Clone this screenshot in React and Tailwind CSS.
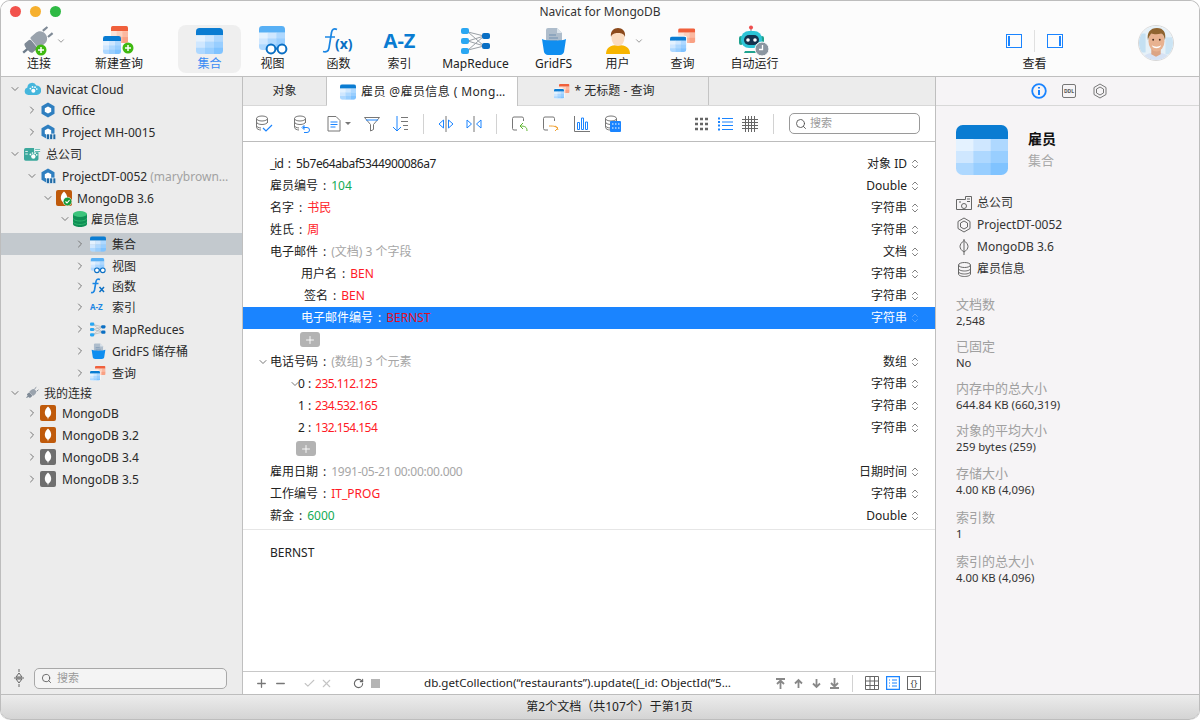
import React, { useId } from 'react'
import { ChevronDown, ChevronRight, ChevronsUpDown, Search, Plus, Minus, Check, X, RotateCw } from 'lucide-react'

const FONT = 'font-["Noto_Sans","Noto_Sans_CJK_SC",sans-serif]'

// ── Coloured app icons ──────────────────────────────────────────────────────

function Grid({ x = 0, y = 0, w = 52, h = 50, top = '#0a7cd2', className }) {
  const id = useId()
  const head = h * 0.28
  const cw = w / 3
  const ch = (h - head) / 3
  const cells = ['#e4f2ff', '#cfe7ff', '#aed8ff', '#cfe7ff', '#aed8ff', '#98ceff', '#aed8ff', '#98ceff', '#80c3ff']
  return (
    <g className={className}>
      <clipPath id={id}><rect x={x} y={y} width={w} height={h} rx={w * 0.13} /></clipPath>
      <g clipPath={`url(#${id})`}>
        <rect x={x} y={y} width={w} height={head} fill={top} />
        {cells.map((c, i) => (
          <rect key={i} x={x + (i % 3) * cw} y={y + head + Math.floor(i / 3) * ch} width={cw + 0.5} height={ch + 0.5} fill={c} />
        ))}
      </g>
    </g>
  )
}

function OrangeGrid({ x, y, w, h }) {
  const id = useId()
  const head = h * 0.3
  const cw = w / 3
  const ch = (h - head) / 2
  const cells = ['#fde3d8', '#fcd0bd', '#fbb8a0', '#fcd0bd', '#fbb8a0', '#f9a184']
  return (
    <g>
      <clipPath id={id}><rect x={x} y={y} width={w} height={h} rx={w * 0.1} /></clipPath>
      <g clipPath={`url(#${id})`}>
        <rect x={x} y={y} width={w} height={head} fill="#f0603c" />
        {cells.map((c, i) => (
          <rect key={i} x={x + (i % 3) * cw} y={y + head + Math.floor(i / 3) * ch} width={cw + 0.5} height={ch + 0.5} fill={c} />
        ))}
      </g>
    </g>
  )
}

const TableIcon = ({ className }) => (
  <svg viewBox="0 0 52 50" className={className}><Grid /></svg>
)

const QueryIcon = ({ className }) => (
  <svg viewBox="0 0 32 30" className={className}>
    <OrangeGrid x={10} y={0} w={21} h={18} />
    <rect x={0} y={9} width={21} height={20} rx={3} fill="#fff" />
    <Grid x={0} y={10} w={20} h={19} top="#0a7cd2" />
  </svg>
)

const GreenPlus = ({ x, y, r = 5.5 }) => (
  <g>
    <circle cx={x} cy={y} r={r} fill="#3fb911" />
    <path d={`M${x - r * 0.55} ${y}h${r * 1.1}M${x} ${y - r * 0.55}v${r * 1.1}`} stroke="#fff" strokeWidth="1.5" />
  </g>
)

const PlugIcon = ({ className, plus }) => (
  <svg viewBox="0 0 42 30" className={className}>
    <g transform="rotate(-40 20 15)">
      <path d="M2 15h7" stroke="#6d7b8a" strokeWidth="2.4" />
      <path d="M9 9h5a2 2 0 0 1 2 2v8a2 2 0 0 1-2 2H9c-1 0-2-2-2-6s1-6 2-6z" fill="#7f8a96" />
      <path d="M18 8h6c4 0 7 3 7 7s-3 7-7 7h-6a1.500 1.500 0 0 1-1.500-1.500v-11A1.500 1.500 0 0 1 18 8z" fill="#9aa3ad" />
      <path d="M31 11h6M31 19h6" stroke="#7f8a96" strokeWidth="2.200" />
    </g>
    {plus && <GreenPlus x={24} y={24} />}
  </svg>
)

const ViewIcon = ({ className }) => (
  <svg viewBox="0 0 30 30" className={className}>
    <Grid x={1} y={0} w={26} h={24} top="#58b0f5" />
    <circle cx={13} cy={23} r={4.400} fill="#fff" stroke="#0a6fc4" strokeWidth="2" />
    <circle cx={24} cy={23} r={4.400} fill="#fff" stroke="#0a6fc4" strokeWidth="2" />
    <path d="M17 22.500h3" stroke="#0a6fc4" strokeWidth="2" />
  </svg>
)

const FxIcon = () => (
  <svg viewBox="0 0 34 28" className="w-[34px] h-[28px]">
    <path d="M15 2.500c-3-1.500-5 0-5.500 3L7 21c-.5 3-2.500 4.500-6 3.500M3 10h10" fill="none" stroke="#1b86e3" strokeWidth="1.700" />
    <text x="13" y="22" fontSize="14" fontWeight="700" fill="#0a6fc4" className={FONT}>(x)</text>
  </svg>
)

const SmallFx = () => (
  <svg viewBox="0 0 16 16" className="w-[16px] h-[16px]">
    <path d="M10 1.500c-2.500-1-3.500 0-4 2L4.500 12c-.4 2-1.500 3-3.500 2.500M2.500 5.500h6" fill="none" stroke="#1b86e3" strokeWidth="1.600" />
    <path d="M9.500 9l4.500 5M14 9l-4.500 5" stroke="#0a6fc4" strokeWidth="1.500" />
  </svg>
)

const MapReduceIcon = ({ className }) => (
  <svg viewBox="0 0 30 26" className={className}>
    <path d="M7 4l16 4M7 4l16 14M7 13l16-5M7 13l16 5M7 22l16-14M7 22l16-4" stroke="#9aa0a6" strokeWidth="1" />
    <rect x="0" y="0" width="8" height="6" rx="2" fill="#2aa7f2" />
    <rect x="0" y="10" width="8" height="6" rx="2" fill="#2aa7f2" />
    <rect x="0" y="20" width="8" height="6" rx="2" fill="#2aa7f2" />
    <rect x="21" y="5" width="8" height="6" rx="2" fill="#0a6fc4" />
    <rect x="21" y="15" width="8" height="6" rx="2" fill="#0a6fc4" />
  </svg>
)

const GridFsIcon = ({ className }) => (
  <svg viewBox="0 0 26 28" className={className}>
    <path d="M7 1h9l5 5v11H5V3a2 2 0 0 1 2-2z" fill="#aebdcc" />
    <path d="M16 1l5 5h-5z" fill="#dde5ec" />
    <path d="M8 8h7M8 11h9M8 14h8" stroke="#6f8fb0" strokeWidth="1" />
    <path d="M1 12c3 2 21 2 24 0l-2 13c-.3 1.500-2 3-4 3H7c-2 0-3.700-1.500-4-3z" fill="#0f8ef0" />
  </svg>
)

const UserIcon = ({ className }) => (
  <svg viewBox="0 0 26 28" className={className}>
    <path d="M1 27c0-6 4-9 12-9s12 3 12 9z" fill="#f7b500" />
    <ellipse cx="13" cy="11" rx="6.500" ry="8" fill="#fbdcc0" />
    <path d="M6 10c-1-6 3-9 7-9s8 3 7 9c-1-3-3-4-7-4s-6 1-7 4z" fill="#8c4a1c" />
  </svg>
)

const RobotIcon = () => (
  <svg viewBox="0 0 32 32" className="w-[32px] h-[32px]">
    <path d="M12 7V3" stroke="#8a9aa5" strokeWidth="1.200" />
    <circle cx="12" cy="2.500" r="2" fill="#ef4d4d" />
    <rect x="0" y="11" width="4" height="9" rx="2" fill="#1fa38f" />
    <rect x="21" y="11" width="4" height="9" rx="2" fill="#1fa38f" />
    <rect x="2" y="6" width="21" height="17" rx="8" fill="#2cc4d6" />
    <rect x="5" y="10" width="15" height="10" rx="5" fill="#14324e" />
    <circle cx="9" cy="15" r="1.800" fill="#fff" />
    <circle cx="16" cy="15" r="1.800" fill="#fff" />
    <path d="M6 26h13l2 2H5z" fill="#1fa38f" />
    <circle cx="23" cy="24" r="7" fill="#8b96a1" stroke="#fff" strokeWidth="1" />
    <path d="M23.500 20v4.500H20" fill="none" stroke="#fff" strokeWidth="1.300" />
  </svg>
)

const CloudIcon = ({ className }) => (
  <svg viewBox="0 0 20 16" className={className}>
    <path d="M5 15a4.500 4.500 0 0 1-1-8.800A5.500 5.500 0 0 1 14.500 4 5.500 5.500 0 0 1 15 15z" fill="#45b6dc" />
    <circle cx="11" cy="10" r="2.400" fill="#fff" />
    <circle cx="7.500" cy="7.500" r="1" fill="#fff" /><circle cx="10" cy="5.500" r="1" fill="#fff" /><circle cx="13" cy="5.800" r="1" fill="#fff" /><circle cx="15" cy="8" r="1" fill="#fff" />
  </svg>
)

const OfficeIcon = ({ className }) => (
  <svg viewBox="0 0 20 16" className={className}>
    <rect x="0" y="1" width="17" height="15" rx="2" fill="#3ba89c" />
    <path d="M12 1h7v5h-7z" fill="#fff" /><path d="M13 2.500h6M13 5h6" stroke="#3ba89c" strokeWidth="1" />
    <path d="M1.500 5h3M1.500 8h3" stroke="#fff" strokeWidth="1" />
    <circle cx="11" cy="11" r="2.600" fill="#fff" />
    <circle cx="7.500" cy="8.500" r="1" fill="#fff" /><circle cx="10" cy="6.800" r="1" fill="#fff" /><circle cx="13" cy="7" r="1" fill="#fff" /><circle cx="15" cy="9" r="1" fill="#fff" />
  </svg>
)

const HexIcon = ({ className, people }) => (
  <svg viewBox="0 0 16 16" className={className}>
    <path d="M8 .5l6.500 3.700v7.600L8 15.500l-6.500-3.700V4.200z" fill="#2f7fc0" />
    <path d="M8 4.500l3.200 1.800v3.400L8 11.500 4.800 9.700V6.300z" fill="#fff" />
    {people && (
      <g fill="#1f6aa6" stroke="#fff" strokeWidth=".6">
        <rect x="6.500" y="10" width="3" height="5.500" />
        <rect x="9.800" y="10" width="3" height="5.500" />
        <rect x="13" y="10" width="2.800" height="5.500" />
      </g>
    )}
  </svg>
)

const MongoIcon = ({ className, gray, ok }) => (
  <svg viewBox="0 0 16 16" className={className}>
    <rect width="16" height="16" rx="2" fill={gray ? '#6f6f6f' : '#bf5a0b'} />
    <path d="M8 1.500c2.200 2 3.200 4.200 3.200 6.300s-1.300 4-2.800 4.900L8 14.800l-.4-2.100C6.100 11.800 4.800 10 4.800 7.800s1-4.300 3.200-6.300z" fill="#fff" />
    {ok && (
      <g>
        <circle cx="11.500" cy="11.500" r="4.300" fill="#129a3a" stroke="#fff" strokeWidth=".6" />
        <path d="M9.500 11.500l1.500 1.500 2.500-2.800" fill="none" stroke="#fff" strokeWidth="1.100" />
      </g>
    )}
  </svg>
)

const DbIcon = ({ className }) => (
  <svg viewBox="0 0 14 16" className={className}>
    <path d="M0 3v10c0 1.600 3 3 7 3s7-1.400 7-3V3z" fill="#0f8f55" />
    <ellipse cx="7" cy="3" rx="7" ry="3" fill="#3cc47c" />
    <path d="M0 7c0 1.600 3 3 7 3s7-1.400 7-3" fill="none" stroke="#2eb56e" strokeWidth="1" />
    <path d="M0 10.500c0 1.600 3 3 7 3s7-1.400 7-3" fill="none" stroke="#2eb56e" strokeWidth="1" />
  </svg>
)

const Avatar = () => (
  <svg viewBox="0 0 36 36" className="w-[36px] h-[36px] rounded-full border border-[#d8d8d8]">
    <rect width="36" height="36" fill="#e6f1f8" />
    <rect x="0" y="8" width="7" height="20" fill="#c4e0f2" />
    <rect x="28" y="12" width="8" height="18" fill="#cbe4f4" />
    <path d="M3 36c1-6 8-8 15-8s14 2 15 8z" fill="#d6e2f4" />
    <path d="M13 24h10v6l-5 2.500-5-2.500z" fill="#dca484" />
    <ellipse cx="18.500" cy="16" rx="8.500" ry="11" fill="#e8b290" />
    <path d="M9.500 15C8 7 12 2 19 2s10 5 8.500 13c-1-4-2-6.500-4-7-3 1-8 1-10.500 0-1.500 2-3 4-3.500 7z" fill="#8f6430" />
    <path d="M13.500 20.500c2.500 2 7.500 2 10 0-1 4-9 4-10 0z" fill="#fff" />
    <circle cx="15" cy="14.500" r="1" fill="#4a3020" /><circle cx="22" cy="14.500" r="1" fill="#4a3020" />
  </svg>
)

// ── Line icons for the small bars ───────────────────────────────────────────

const Line = ({ children, className = 'w-[18px] h-[18px]', box = '0 0 18 18' }) => (
  <svg viewBox={box} fill="none" strokeWidth="1" className={className}>{children}</svg>
)

const GrayDb = () => (
  <g stroke="#777">
    <ellipse cx="7" cy="3.500" rx="5.500" ry="2.500" />
    <path d="M1.500 3.500v9c0 1.400 2.500 2.500 4.500 2.500M12.500 3.500V8M1.500 7c0 1.400 2.500 2.500 5.500 2.500s5.500-1.100 5.500-2.500M1.500 10.500c0 1.400 2 2.300 4.500 2.500" />
  </g>
)

const DataTools = () => (
  <div className="flex items-center h-[36px] pl-[12px] shrink-0 border-b border-[#bcbcbc]">
    <Line><GrayDb /><path d="M8 13l3 3 6-6" stroke="#1a84ff" strokeWidth="1.200" /></Line>
    <div className="w-[20px]" />
    <Line><GrayDb /><path d="M9 12.500l2-2v4zM10 12.500h4a2.500 2.500 0 0 1 0 5h-3" stroke="#1a84ff" /></Line>
    <div className="w-[14px]" />
    <Line>
      <path d="M3 1.500h8l4 4V16H3z" stroke="#777" />
      <path d="M5.500 7h7M5.500 9.500h7M5.500 12h5" stroke="#1a84ff" strokeWidth="1.200" />
    </Line>
    <span className="ml-[2px] w-0 h-0 border-x-[3px] border-x-transparent border-t-[3px] border-t-[#777]" />
    <div className="w-[12px]" />
    <Line>
      <path d="M1.500 2.500h15M1.500 2.500l6 7V16l3-1.500v-5l6-7" stroke="#777" />
      <path d="M3 5h12" stroke="#1a84ff" />
    </Line>
    <div className="w-[10px]" />
    <Line>
      <path d="M6 1v15M2 12l4 4 4-4" stroke="#1a84ff" />
      <path d="M10 2.500h7M10 6.500h7M12 10.500h5M13 14.500h4" stroke="#777" />
    </Line>
    <div className="w-px h-[20px] bg-[#d2d2d2] ml-[14px]" />
    <div className="w-[13px]" />
    <Line>
      <path d="M9 1v16" stroke="#777" />
      <path d="M6.500 5L2 9l4.500 4zM11.500 5L16 9l-4.500 4z" stroke="#1a84ff" />
    </Line>
    <div className="w-[10px]" />
    <Line>
      <path d="M9 1v16" stroke="#777" />
      <path d="M2 5l4.500 4L2 13zM16 5l-4.500 4 4.500 4z" stroke="#1a84ff" />
    </Line>
    <div className="w-px h-[20px] bg-[#d2d2d2] ml-[13px]" />
    <div className="w-[14px]" />
    <Line>
      <path d="M6 15H3a1.500 1.500 0 0 1-1.500-1.500v-10A1.500 1.500 0 0 1 3 2h8a1.500 1.500 0 0 1 1.500 1.500V6" stroke="#777" />
      <path d="M16 16c0-4-2-5-7-5M12 8l-3 3 3 3" stroke="#5cb52e" />
    </Line>
    <div className="w-[13px]" />
    <Line>
      <path d="M6 15H3a1.500 1.500 0 0 1-1.500-1.500v-10A1.500 1.500 0 0 1 3 2h8a1.500 1.500 0 0 1 1.500 1.500V6" stroke="#777" />
      <path d="M7 11c5 0 8 0 9 4M13 16l3-3-3-2" stroke="#f0a030" />
    </Line>
    <div className="w-[13px]" />
    <Line>
      <path d="M1.500 1v15.500H17" stroke="#777" />
      <path d="M4.500 7.500h2v7h-2zM8.500 3h2v11.500h-2zM12.500 7h2v7.500h-2z" stroke="#1a84ff" />
    </Line>
    <div className="w-[13px]" />
    <Line>
      <GrayDb />
      <rect x="6" y="6" width="11" height="11" rx="1" fill="#1a84ff" />
      <path d="M8 9h1.500M11 9h1.500M14 9h1.500M8 13h1.500M11 13h1.500M14 13h1.500" stroke="#fff" />
    </Line>

    <div className="ml-auto flex items-center">
      <Line className="w-[14px] h-[14px]" box="0 0 14 14">
        <path d="M0 2h3M5 2h3M10 2h3M0 7h3M5 7h3M10 7h3M0 12h3M5 12h3M10 12h3" stroke="#666" strokeWidth="2.500" />
      </Line>
      <div className="w-[9px]" />
      <Line className="w-[15px] h-[14px]" box="0 0 15 14">
        <path d="M0 1.500h2M0 5h2M0 8.500h2M0 12.500h2" stroke="#1a84ff" strokeWidth="2" />
        <path d="M4 1.500h11M4 5h11M4 8.500h11M4 12.500h11" stroke="#1a84ff" />
      </Line>
      <div className="w-[9px]" />
      <Line className="w-[16px] h-[16px]" box="0 0 16 16">
        <path d="M0 3.500h16M0 6.500h16M0 9.500h16M0 12.500h16M3.500 0v16M6.500 0v16M9.500 0v16M12.500 0v16" stroke="#666" />
      </Line>
      <div className="w-px h-[20px] bg-[#d2d2d2] ml-[15px]" />
      <div className="ml-[15px] mr-[15px] w-[131px] h-[21px] rounded-[5px] border border-[#9a9a9a] flex items-center pl-[5px] gap-[3px]">
        <Search size={12} strokeWidth={1.800} className="text-[#555]" />
        <span className="text-[11px] text-[#9b9b9b]">搜索</span>
      </div>
    </div>
  </div>
)

// ── Top toolbar ─────────────────────────────────────────────────────────────

function ToolItem({ width, label, active, children, caret }) {
  return (
    <div className={`relative flex flex-col items-center h-[48px] shrink-0 rounded-lg ${width} ${active ? 'bg-[#efefef]' : ''}`}>
      <div className="h-[31px] flex items-center justify-center">{children}</div>
      <span className={`text-[12px] leading-[15px] ${active ? 'text-[#3b8cf5]' : 'text-[#222]'}`}>{label}</span>
      {caret && <ChevronDown size={10} strokeWidth={1.800} className={`absolute top-[11px] text-[#777] ${caret}`} />}
    </div>
  )
}

const Toolbar = () => (
  <div className="h-[76px] shrink-0 bg-[#fcfcfc] border-b border-[#bfbfbf] flex flex-col">
    <div className="relative h-[22px] flex items-center justify-center shrink-0">
      <div className="absolute left-[9px] top-[5px] flex gap-[9px]">
        <span className="w-[11px] h-[11px] rounded-full bg-[#f2524c]" />
        <span className="w-[11px] h-[11px] rounded-full bg-[#f6b02e]" />
        <span className="w-[11px] h-[11px] rounded-full bg-[#2fb944]" />
      </div>
      <span className="text-[12px] text-[#333]">Navicat for MongoDB</span>
    </div>
    <div className="flex items-start pt-[2px]">
      <ToolItem width="w-[76px]" label="连接" caret="left-[55px]"><PlugIcon plus className="w-[42px] h-[30px] ml-[-2px]" /></ToolItem>
      <ToolItem width="w-[84px]" label="新建查询">
        <svg viewBox="0 0 32 30" className="w-[32px] h-[30px]">
          <OrangeGrid x={8} y={0} w={17} h={17} />
          <Grid x={0} y={10} w={18} h={18} />
          <GreenPlus x={25} y={22} />
        </svg>
      </ToolItem>
      <div className="w-[17px] shrink-0" />
      <ToolItem width="w-[63px]" label="集合" active><TableIcon className="w-[27px] h-[26px]" /></ToolItem>
      <ToolItem width="w-[63px]" label="视图"><ViewIcon className="w-[30px] h-[30px]" /></ToolItem>
      <ToolItem width="w-[69px]" label="函数"><FxIcon /></ToolItem>
      <ToolItem width="w-[53px]" label="索引">
        <span className="text-[20px] font-bold leading-none text-[#0a7cd2]">A-Z</span>
      </ToolItem>
      <ToolItem width="w-[99px]" label="MapReduce"><MapReduceIcon className="w-[30px] h-[26px]" /></ToolItem>
      <ToolItem width="w-[57px]" label="GridFS"><GridFsIcon className="w-[26px] h-[28px]" /></ToolItem>
      <ToolItem width="w-[71px]" label="用户" caret="left-[52px]"><UserIcon className="w-[26px] h-[28px]" /></ToolItem>
      <ToolItem width="w-[59px]" label="查询"><QueryIcon className="w-[26px] h-[27px]" /></ToolItem>
      <ToolItem width="w-[85px]" label="自动运行"><RobotIcon /></ToolItem>
      <div className="flex-1" />
      <div className="w-[81px] flex flex-col items-center shrink-0 h-[48px]">
        <div className="h-[31px] flex items-center gap-[12px]">
          <span className="w-[16px] h-[14px] border border-[#1a84ff] pl-[1px] py-[1px]"><span className="block w-[2px] h-full bg-[#1a84ff]" /></span>
          <span className="w-px h-[22px] bg-[#e0e0e0]" />
          <span className="w-[16px] h-[14px] border border-[#1a84ff] pr-[1px] py-[1px] flex justify-end"><span className="block w-[2px] h-full bg-[#1a84ff]" /></span>
        </div>
        <span className="text-[12px] leading-[15px] text-[#222]">查看</span>
      </div>
      <div className="w-[63px] shrink-0" />
      <Avatar />
      <div className="w-[25px] shrink-0" />
    </div>
  </div>
)

// ── Sidebar ─────────────────────────────────────────────────────────────────

const LEVELS = [
  { pad: 'pl-[8px]', icon: 'ml-[3px]', text: 'ml-[5px]' },
  { pad: 'pl-[25px]', icon: 'ml-[2px]', text: 'ml-[6px]' },
  { pad: 'pl-[41px]', icon: 'ml-[2px]', text: 'ml-[5px]' },
  { pad: 'pl-[58px]', icon: 'ml-[2px]', text: 'ml-[4px]' },
  { pad: 'pl-[73px]', icon: 'ml-[4px]', text: 'ml-[6px]' },
]

const TREE = [
  { lv: 0, h: 'h-[21px] pt-px', open: true, label: 'Navicat Cloud', icon: <CloudIcon className="w-[17px] h-[14px]" /> },
  { lv: 1, h: 'h-[22px]', label: 'Office', icon: <HexIcon className="w-[16px] h-[16px]" /> },
  { lv: 1, h: 'h-[22px]', label: 'Project MH-0015', icon: <HexIcon people className="w-[16px] h-[16px]" /> },
  { lv: 0, h: 'h-[22px]', open: true, label: '总公司', icon: <OfficeIcon className="w-[17px] h-[14px]" /> },
  { lv: 1, h: 'h-[22px]', open: true, label: 'ProjectDT-0052', note: ' (marybrown…', icon: <HexIcon people className="w-[16px] h-[16px]" /> },
  { lv: 2, h: 'h-[21px] pt-px', open: true, label: 'MongoDB 3.6', icon: <MongoIcon ok className="w-[16px] h-[16px]" /> },
  { lv: 3, h: 'h-[25px] pb-[3px]', open: true, label: '雇员信息', icon: <DbIcon className="w-[14px] h-[16px]" /> },
  { lv: 4, h: 'h-[22px]', label: '集合', selected: true, icon: <TableIcon className="w-[16px] h-[16px]" /> },
  { lv: 4, h: 'h-[20px] pt-[2px]', label: '视图', icon: <ViewIcon className="w-[16px] h-[16px]" /> },
  { lv: 4, h: 'h-[21px] pt-px', label: '函数', icon: <SmallFx /> },
  { lv: 4, h: 'h-[22px]', label: '索引', icon: <span className="w-[16px] text-[8px] font-bold text-[#1b86e3] leading-none">A-Z</span> },
  { lv: 4, h: 'h-[22px]', label: 'MapReduces', icon: <MapReduceIcon className="w-[16px] h-[15px]" /> },
  { lv: 4, h: 'h-[22px]', label: 'GridFS 储存桶', icon: <GridFsIcon className="w-[15px] h-[16px] mx-[0.5px]" /> },
  { lv: 4, h: 'h-[20px] pt-[2px]', label: '查询', icon: <QueryIcon className="w-[16px] h-[15px]" /> },
  { lv: 0, h: 'h-[20px] pt-[2px]', open: true, label: '我的连接', text: 'ml-[3px]', icon: <PlugIcon className="w-[17px] h-[14px]" /> },
  { lv: 1, h: 'h-[22px]', label: 'MongoDB', icon: <MongoIcon className="w-[16px] h-[16px]" /> },
  { lv: 1, h: 'h-[22px]', label: 'MongoDB 3.2', icon: <MongoIcon className="w-[16px] h-[16px]" /> },
  { lv: 1, h: 'h-[22px]', label: 'MongoDB 3.4', icon: <MongoIcon gray className="w-[16px] h-[16px]" /> },
  { lv: 1, h: 'h-[22px]', label: 'MongoDB 3.5', icon: <MongoIcon gray className="w-[16px] h-[16px]" /> },
]

function TreeRow({ row }) {
  const lv = LEVELS[row.lv]
  const Chevron = row.open ? ChevronDown : ChevronRight
  return (
    <div className={`flex items-center ${row.h} ${lv.pad} ${row.selected ? 'bg-[#c3c9ce]' : ''}`}>
      <Chevron size={12} strokeWidth={2} className="text-[#777] shrink-0" />
      <span className={`${lv.icon} flex items-center justify-center shrink-0`}>{row.icon}</span>
      <span className={`${row.text || lv.text} mt-[2px] text-[12px] text-[#2a2a2a] whitespace-nowrap`}>
        {row.label}
        {row.note && <span className="text-[#a2a2a2]">{row.note}</span>}
      </span>
    </div>
  )
}

const Sidebar = () => (
  <aside className="w-[242px] shrink-0 bg-[#ececec] border-r border-[#bfbfbf] flex flex-col">
    <div className="flex-1 pt-px">
      {TREE.map(r => <TreeRow key={r.label} row={r} />)}
    </div>
    <div className="flex items-center h-[26px] mb-[3px] pl-[12px]">
      <Line className="w-[12px] h-[18px]" box="0 0 12 18">
        <path d="M6 0v3M6 15v3M3 8l3-4 3 4zM1 9h10M3 10l3 4 3-4z" stroke="#666" />
      </Line>
      <div className="ml-[9px] w-[193px] h-[21px] bg-[#f4f4f4] rounded-[5px] border border-[#a8a8a8] flex items-center pl-[6px] gap-[5px]">
        <Search size={11} strokeWidth={1.800} className="text-[#555]" />
        <span className="text-[11px] text-[#9b9b9b]">搜索</span>
      </div>
    </div>
  </aside>
)

// ── Document editor ─────────────────────────────────────────────────────────

const RED = 'text-[#ff1a25]'
const GREEN = 'text-[#14ab55]'
const GRAY = 'text-[#a6a6a6]'

const FIELDS = [
  { key: '_id', keyFit: 'tracking-[-1px]', value: '5b7e64abaf5344900086a7', fit: 'tracking-[-0.4px]', tone: 'text-[#222]', type: '对象 ID', pad: 'pl-[27px]' },
  { key: '雇员编号', value: '104', tone: GREEN, type: 'Double', pad: 'pl-[27px]' },
  { key: '名字', value: '书民', tone: RED, type: '字符串', pad: 'pl-[27px]' },
  { key: '姓氏', value: '周', tone: RED, type: '字符串', pad: 'pl-[27px]' },
  { key: '电子邮件', value: '(文档) 3 个字段', tone: GRAY, type: '文档', pad: 'pl-[27px]' },
  { key: '用户名', value: 'BEN', tone: RED, type: '字符串', pad: 'pl-[58px]' },
  { key: '签名', value: 'BEN', tone: RED, type: '字符串', pad: 'pl-[61px]' },
  { key: '电子邮件编号', value: 'BERNST', tone: 'text-[#e0102a]', type: '字符串', pad: 'pl-[58px]', selected: true },
  { add: 'ml-[57px] -mt-[1px]' },
  { key: '电话号码', value: '(数组) 3 个元素', tone: GRAY, type: '数组', pad: 'pl-[14px]', open: true },
  { key: '0', value: '235.112.125', fit: 'tracking-[-0.55px]', compact: true, tone: RED, type: '字符串', pad: 'pl-[46px]', open: true, tight: true },
  { key: '1', value: '234.532.165', fit: 'tracking-[-0.55px]', compact: true, tone: RED, type: '字符串', pad: 'pl-[55px]' },
  { key: '2', value: '132.154.154', fit: 'tracking-[-0.55px]', compact: true, tone: RED, type: '字符串', pad: 'pl-[55px]' },
  { add: 'ml-[53px] -mt-[3px]' },
  { key: '雇用日期', value: '1991-05-21 00:00:00.000', fit: 'tracking-[-0.26px]', tone: GRAY, type: '日期时间', pad: 'pl-[27px]' },
  { key: '工作编号', value: 'IT_PROG', tone: RED, type: '字符串', pad: 'pl-[27px]' },
  { key: '薪金', value: '6000', tone: GREEN, type: 'Double', pad: 'pl-[27px]' },
]

function FieldRow({ f }) {
  if (f.add) {
    return (
      <div className="h-[22px] flex items-center">
        <span className={`${f.add} w-[20px] h-[15px] rounded-[3px] bg-[#b3b3b3] flex items-center justify-center`}>
          <Plus size={12} strokeWidth={1.800} className="text-white" />
        </span>
      </div>
    )
  }
  const ink = f.selected ? 'text-white' : 'text-[#222]'
  return (
    <div className={`h-[22px] flex items-center text-[12px] pr-[14px] ${f.pad} ${f.selected ? 'bg-[#1a84ff]' : ''}`}>
      {f.open && <ChevronDown size={12} strokeWidth={1.800} className={`text-[#666] shrink-0 ${f.tight ? '-mr-[3px]' : 'mr-px'}`} />}
      <span className={`${ink} ${f.keyFit || ''}`}>{f.key}</span>
      <span className={`${f.compact ? 'ml-[3px] mr-[4px]' : 'ml-[5px] mr-[5px]'} ${ink}`}>:</span>
      <span className={`${f.tone} ${f.fit || ''}`}>{f.value}</span>
      <span className={`ml-auto ${ink}`}>{f.type}</span>
      <ChevronsUpDown size={12} strokeWidth={1.500} className={`ml-[2px] ${f.selected ? 'text-[#6fb0ff]' : 'text-[#555]'}`} />
    </div>
  )
}

const ARROW = 'w-[11px] h-[11px]'

const BottomBar = () => (
  <div className="h-[23px] shrink-0 border-t border-[#c8c8c8] flex items-center pl-[12px] text-[#777]">
    <Plus size={13} strokeWidth={2.400} />
    <Minus size={13} strokeWidth={2.400} className="ml-[6px]" />
    <Check size={13} strokeWidth={2} className="ml-[16px] text-[#c4c4c4]" />
    <X size={13} strokeWidth={2} className="ml-[4px] text-[#c4c4c4]" />
    <RotateCw size={11} strokeWidth={2.400} className="ml-[20px] text-[#666]" />
    <span className="ml-[7px] w-[9px] h-[9px] bg-[#b5b5b5]" />
    <span className="ml-[44px] w-[351px] text-[11.6px] text-[#222] whitespace-nowrap overflow-hidden">db.getCollection(“restaurants”).update([_id: ObjectId(“5…</span>
    <div className="flex items-center gap-[7px] text-[#8a8a8a]">
      <Line className={ARROW} box="0 0 11 11"><path d="M1 1h9M5.500 11V3M2 6l3.500-3.500L9 6" stroke="#888" strokeWidth="1.800" /></Line>
      <Line className={ARROW} box="0 0 11 11"><path d="M5.500 10V2M2 5.500L5.500 2 9 5.500" stroke="#888" strokeWidth="1.800" /></Line>
      <Line className={ARROW} box="0 0 11 11"><path d="M5.500 1v8M2 5.500L5.500 9 9 5.500" stroke="#888" strokeWidth="1.800" /></Line>
      <Line className={ARROW} box="0 0 11 11"><path d="M1 10h9M5.500 0v8M2 5l3.500 3.500L9 5" stroke="#888" strokeWidth="1.800" /></Line>
    </div>
    <span className="ml-[12px] w-px h-[17px] bg-[#d2d2d2]" />
    <div className="ml-[12px] flex items-center gap-[7px]">
      <Line className="w-[14px] h-[14px]" box="0 0 14 14">
        <path d="M.5.5h13v13H.5zM.5 5h13M.5 9.500h13M5 .5v13M9.500.5v13" stroke="#666" />
      </Line>
      <Line className="w-[14px] h-[14px]" box="0 0 14 14">
        <path d="M.5.5h13v13H.5z" stroke="#1a84ff" strokeWidth="1.400" />
        <path d="M3 4h1M6 4h5M3 7h1M6 7h5M3 10h1M6 10h5" stroke="#1a84ff" />
      </Line>
      <span className="w-[14px] h-[14px] border border-[#666] flex items-center justify-center text-[9px] leading-none text-[#444]">{'{}'}</span>
    </div>
  </div>
)

const Editor = () => (
  <main className="flex-1 min-w-0 flex flex-col bg-white">
    <div className="h-[29px] shrink-0 flex bg-[#ececec] border-b border-[#d8d8d8] text-[12px] text-[#2a2a2a]">
      <div className="w-[84px] flex items-center justify-center border-r border-[#c4c4c4]">对象</div>
      <div className="w-[191px] -mb-px bg-white flex items-center pl-[13px] gap-[5px] border-r border-[#c4c4c4]">
        <TableIcon className="w-[16px] h-[16px]" />
        <span className="whitespace-nowrap tracking-[0.4px]">雇员 @雇员信息 ( Mong…</span>
      </div>
      <div className="w-[191px] flex items-center justify-center gap-[5px] pr-[18px] border-r border-[#c4c4c4]">
        <QueryIcon className="w-[16px] h-[15px]" />
        <span>* 无标题 - 查询</span>
      </div>
    </div>
    <DataTools />
    <div className="h-[388px] shrink-0 pt-[11px] border-b border-[#e6e6e6]">
      {FIELDS.map((f, i) => <FieldRow key={i} f={f} />)}
    </div>
    <div className="flex-1 pl-[27px] pt-[14px] text-[12px] text-[#222]">BERNST</div>
    <BottomBar />
  </main>
)

// ── Info panel ──────────────────────────────────────────────────────────────

const STATS = [
  ['文档数', '2,548', 'mt-[16px]'],
  ['已固定', 'No', 'mt-[10px]'],
  ['内存中的总大小', '644.84 KB (660,319)', 'mt-[10px]'],
  ['对象的平均大小', '259 bytes (259)', 'mt-[10px]'],
  ['存储大小', '4.00 KB (4,096)', 'mt-[11px]'],
  ['索引数', '1', 'mt-[12px]'],
  ['索引的总大小', '4.00 KB (4,096)', 'mt-[12px]'],
]

const InfoLine = ({ icon, children }) => (
  <div className="h-[22px] flex items-center gap-[5px] text-[12px] text-[#333]">
    <span className="w-[16px] flex justify-center">{icon}</span>
    {children}
  </div>
)

const InfoPanel = () => (
  <aside className="w-[264px] shrink-0 bg-[#f6f4f6] border-l border-[#bfbfbf] flex flex-col">
    <div className="h-[29px] shrink-0 border-b border-[#d8d8d8] flex items-center pl-[95px]">
      <Line className="w-[16px] h-[16px]" box="0 0 16 16">
        <circle cx="8" cy="8" r="6.800" stroke="#1a84ff" strokeWidth="1.800" />
        <path d="M8 7v5M8 4v1.600" stroke="#1a84ff" strokeWidth="2" />
      </Line>
      <span className="ml-[15px] w-[14px] h-[14px] border border-[#777] rounded-[2px] flex items-center justify-center text-[5px] font-bold leading-none text-[#555]">DDL</span>
      <Line className="ml-[17px] w-[14px] h-[16px]" box="0 0 14 16">
        <path d="M7 1l6 3.500v7L7 15l-6-3.500v-7z" stroke="#777" />
        <path d="M7 4l3.500 2v4L7 12l-3.500-2V6z" stroke="#777" />
      </Line>
    </div>
    <div className="pl-[20px]">
      <div className="flex items-start pt-[19px]">
        <TableIcon className="w-[52px] h-[50px]" />
        <div className="ml-[20px] pt-[3px]">
          <div className="text-[14px] leading-[22px] font-bold text-[#111]">雇员</div>
          <div className="text-[13px] leading-[20px] text-[#a8a8a8]">集合</div>
        </div>
      </div>
      <div className="mt-[17px]">
        <InfoLine icon={
          <Line className="w-[16px] h-[15px]" box="0 0 16 15">
            <path d="M.5 3.500h9v-3h6v13H.5z" stroke="#666" />
            <circle cx="8" cy="10" r="2.500" stroke="#666" />
            <path d="M3 6h2M11 3h3M11 5.500h3" stroke="#666" />
          </Line>
        }>总公司</InfoLine>
        <InfoLine icon={
          <Line className="w-[14px] h-[16px]" box="0 0 14 16">
            <path d="M7 1l6 3.500v7L7 15l-6-3.500v-7z" stroke="#666" />
            <path d="M7 4l3.500 2v4L7 12l-3.500-2V6z" stroke="#666" />
          </Line>
        }>ProjectDT-0052</InfoLine>
        <InfoLine icon={
          <Line className="w-[10px] h-[16px]" box="0 0 10 16">
            <path d="M5 0v16M5 1.500c2.500 2 4 4 4 6s-1.500 4-4 5.500C2.500 11.500 1 9.500 1 7.500s1.500-4 4-6z" stroke="#666" />
          </Line>
        }>MongoDB 3.6</InfoLine>
        <InfoLine icon={
          <Line className="w-[13px] h-[15px]" box="0 0 13 15">
            <ellipse cx="6.500" cy="3" rx="6" ry="2.500" stroke="#666" />
            <path d="M.5 3v9c0 1.400 2.700 2.500 6 2.500s6-1.100 6-2.500V3M.5 6.500c0 1.400 2.700 2.500 6 2.500s6-1.100 6-2.500M.5 9.500c0 1.400 2.700 2.500 6 2.500s6-1.100 6-2.500" stroke="#666" />
          </Line>
        }>雇员信息</InfoLine>
      </div>
      {STATS.map(([k, v, gap]) => (
        <div key={k} className={gap}>
          <div className="text-[13px] leading-[16px] text-[#a0a0a0]">{k}</div>
          <div className="text-[11.3px] leading-[15px] mt-[1px] text-[#333]">{v}</div>
        </div>
      ))}
    </div>
  </aside>
)

export default function App() {
  return (
    <div className={`w-[1200px] h-[720px] flex flex-col overflow-hidden rounded-[10px] border-x border-[#bdbdbd] border-t ${FONT}`}>
      <Toolbar />
      <div className="flex-1 min-h-0 flex">
        <Sidebar />
        <Editor />
        <InfoPanel />
      </div>
      <div className="h-[26px] shrink-0 border-t border-b border-[#bdbdbd] bg-gradient-to-b from-[#ececec] to-[#d4d4d4] flex items-center justify-center pl-[19px] text-[12px] text-[#222] rounded-b-[10px]">
        第2个文档（共107个）于第1页
      </div>
    </div>
  )
}
